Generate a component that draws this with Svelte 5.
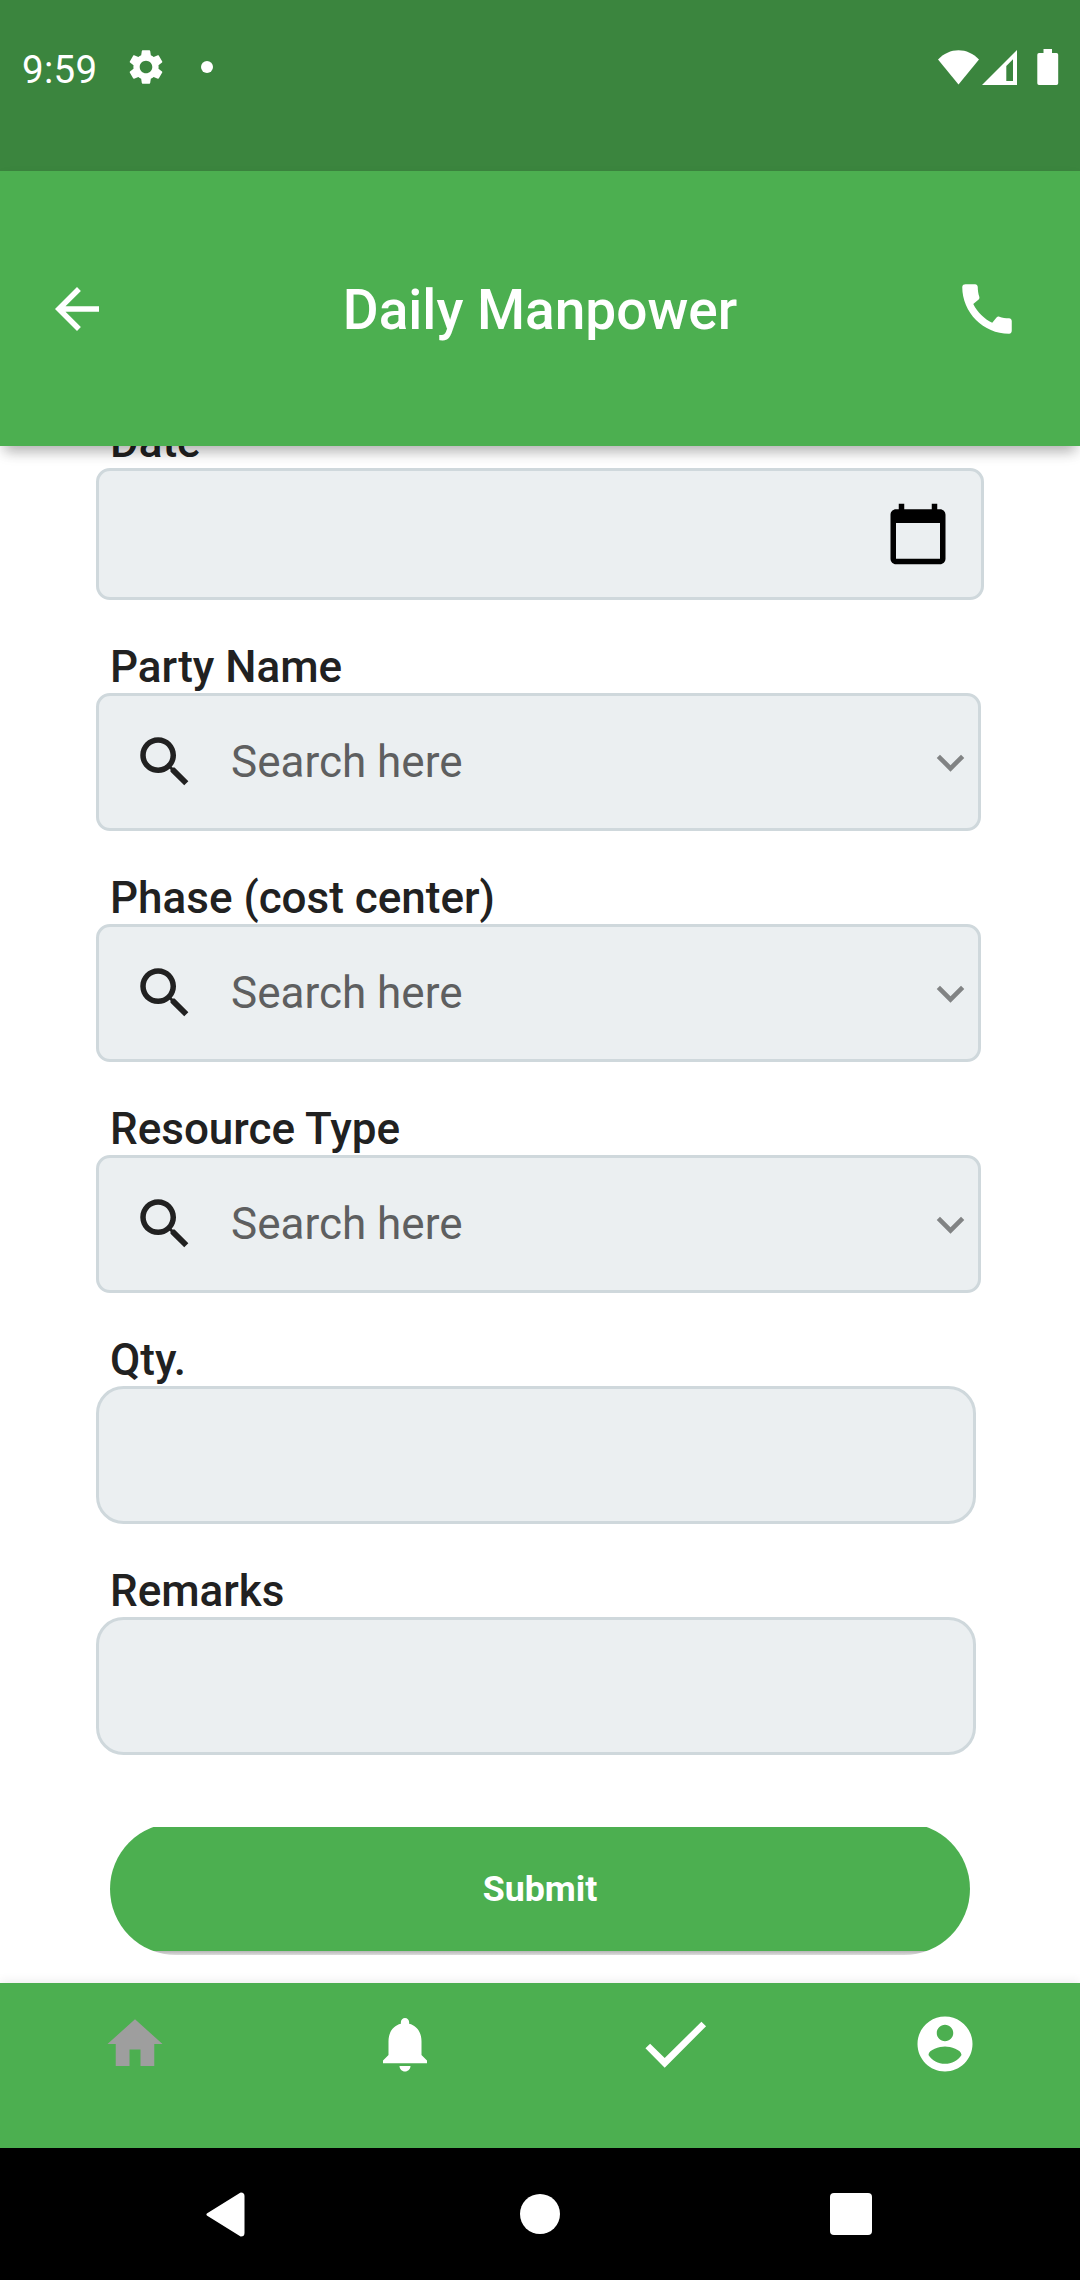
<script>
  const selects = ['Party Name', 'Phase (cost center)', 'Resource Type'];
  const inputs = ['Qty.', 'Remarks'];
</script>

<div class="screen">
  <div class="status">
    <span class="clock">9:59</span>
    <svg class="gear" viewBox="0 0 24 24"><path d="M19.14 12.94c.04-.3.06-.61.06-.94 0-.32-.02-.64-.07-.94l2.03-1.58c.18-.14.23-.41.12-.61l-1.92-3.32c-.12-.22-.37-.29-.59-.22l-2.39.96c-.5-.38-1.03-.7-1.62-.94l-.36-2.54c-.04-.24-.24-.41-.48-.41h-3.84c-.24 0-.43.17-.47.41l-.36 2.54c-.59.24-1.13.57-1.62.94l-2.39-.96c-.22-.08-.47 0-.59.22L2.74 8.87c-.12.21-.08.47.12.61l2.03 1.58c-.05.3-.09.63-.09.94s.02.64.07.94l-2.03 1.58c-.18.14-.23.41-.12.61l1.92 3.32c.12.22.37.29.59.22l2.39-.96c.5.38 1.03.7 1.62.94l.36 2.54c.05.24.24.41.48.41h3.84c.24 0 .44-.17.47-.41l.36-2.54c.59-.24 1.13-.56 1.62-.94l2.39.96c.22.08.47 0 .59-.22l1.92-3.32c.12-.22.07-.47-.12-.61l-2.01-1.58zM12 15.6c-1.98 0-3.6-1.62-3.6-3.6s1.62-3.6 3.6-3.6 3.6 1.62 3.6 3.6-1.62 3.6-3.6 3.6z" /></svg>
    <span class="dot"></span>
    <svg class="signals" viewBox="0 0 124 40">
      <path d="M0 12.5C5.5 6.500 13 3.200 20.500 3.200S35.500 6.500 41 12.500L20.500 37.500z" />
      <path fill-rule="evenodd" d="M44 38L79 3V38zM68.300 19v15h6.700V12.300z" />
      <path d="M105.500 2h8.500v4h4.500a1.700 1.700 0 0 1 1.700 1.700v28.600a1.700 1.700 0 0 1-1.700 1.700h-17.500a1.700 1.700 0 0 1-1.700-1.700V7.700A1.700 1.700 0 0 1 101 6h4.500z" />
    </svg>
  </div>

  <header>
    <svg class="icon" viewBox="0 0 24 24"><path d="M20 11H7.830l5.590-5.590L12 4l-8 8 8 8 1.410-1.410L7.830 13H20v-2z" /></svg>
    <h1>Daily Manpower</h1>
    <svg class="icon" viewBox="0 0 24 24"><path d="M20.010 15.380c-1.230 0-2.420-.2-3.530-.560-.350-.120-.740-.030-1.010.240l-1.570 1.970c-2.830-1.350-5.480-3.900-6.890-6.830l1.950-1.660c.270-.280.350-.670.240-1.020-.370-1.110-.560-2.300-.560-3.530 0-.540-.450-.990-.990-.990H4.190C3.650 3 3 3.240 3 3.990 3 13.280 10.730 21 20.010 21c.710 0 .990-.630.990-1.180v-3.450c0-.540-.450-.990-.990-.990z" /></svg>
  </header>

  <main>
    <div class="group">
      <span class="label">Date</span>
      <div class="field date">
        <svg class="icon" viewBox="0 0 24 24"><path d="M20 3h-1V1h-2v2H7V1H5v2H4c-1.100 0-2 .9-2 2v16c0 1.100.9 2 2 2h16c1.100 0 2-.9 2-2V5c0-1.100-.9-2-2-2zm0 18H4V8h16v13z" /></svg>
      </div>
    </div>
    {#each selects as name}
      <div class="group">
        <span class="label">{name}</span>
        <div class="field select">
          <svg class="icon" viewBox="0 0 24 24"><path d="M15.500 14h-.790l-.280-.270C15.410 12.590 16 11.110 16 9.500 16 5.910 13.090 3 9.500 3S3 5.910 3 9.500 5.910 16 9.500 16c1.610 0 3.090-.590 4.230-1.570l.270.280v.790l5 4.990L20.490 19l-4.990-5zm-6 0C7.010 14 5 11.990 5 9.500S7.010 5 9.500 5 14 7.010 14 9.500 11.990 14 9.500 14z" /></svg>
          <span class="hint">Search here</span>
          <svg class="chevron" viewBox="0 0 24 24"><path d="M7.410 8.590L12 13.170l4.590-4.580L18 10l-6 6-6-6z" /></svg>
        </div>
      </div>
    {/each}
    {#each inputs as name}
      <div class="group">
        <span class="label">{name}</span>
        <div class="field text"></div>
      </div>
    {/each}
    <button>Submit</button>
  </main>

  <nav class="tabs">
    <svg class="icon active" viewBox="0 0 24 24"><path d="M10 20v-6h4v6h5v-8h3L12 3 2 12h3v8z" /></svg>
    <svg class="icon" viewBox="0 0 24 24"><path d="M12 22c1.100 0 2-.9 2-2h-4c0 1.100.890 2 2 2zm6-6v-5c0-3.070-1.640-5.640-4.500-6.320V4c0-.830-.670-1.500-1.500-1.500s-1.500.670-1.500 1.500v.680C7.630 5.360 6 7.920 6 11v5l-2 2v1h16v-1l-2-2z" /></svg>
    <svg class="icon" viewBox="0 0 24 24"><path d="M1.250 13.550L2.950 11.880 8.250 17.120 21.600 3.900 23.300 5.530 8.250 20.600z" /></svg>
    <svg class="icon" viewBox="0 0 24 24"><path d="M12 2C6.480 2 2 6.480 2 12s4.480 10 10 10 10-4.480 10-10S17.520 2 12 2zm0 3c1.660 0 3 1.340 3 3s-1.340 3-3 3-3-1.340-3-3 1.340-3 3-3zm0 14.200c-2.500 0-4.710-1.280-6-3.220.030-1.990 4-3.080 6-3.080 1.990 0 5.970 1.090 6 3.080-1.290 1.940-3.500 3.220-6 3.220z" /></svg>
  </nav>

  <div class="system">
    <svg class="back" viewBox="0 0 39 45"><path d="M35 2L2 22.500L35 43Q37 43 37 41V4Q37 2 35 2z" /></svg>
    <span class="home"></span>
    <span class="recent"></span>
  </div>
</div>

<style>
  :global(body) {
    margin: 0;
  }
  .screen {
    width: 1080px;
    height: 2280px;
    overflow: hidden;
    display: flex;
    flex-direction: column;
    background: #fff;
    color: #212121;
    font-family: Roboto, sans-serif;
  }
  svg {
    display: block;
    flex: none;
    fill: currentColor;
  }
  .icon {
    width: 66px;
    height: 66px;
  }

  .status {
    box-sizing: border-box;
    height: 171px;
    flex: none;
    display: flex;
    align-items: flex-start;
    padding: 46px 20px 0 22px;
    background: #3b853e;
    color: #fff;
  }
  .clock {
    width: 103px;
    font-size: 38.500px;
    line-height: 47px;
    letter-spacing: 0.3px;
  }
  .gear {
    width: 42px;
    height: 42px;
  }
  .dot {
    width: 12px;
    height: 12px;
    margin: 15px 0 0 34px;
    border-radius: 50%;
    background: #fff;
  }
  .signals {
    width: 124px;
    height: 40px;
    margin: 1px -2px 0 auto;
  }

  header {
    box-sizing: border-box;
    height: 275px;
    flex: none;
    display: grid;
    grid-template-columns: 66px 1fr 66px;
    align-items: start;
    padding: 105px 60px 0 44px;
    background: #4caf50;
    color: #fff;
    position: relative;
    z-index: 1;
    box-shadow: 0 10px 13px -5px rgba(0, 0, 0, 0.28), 0 6px 14px rgba(0, 0, 0, 0.06);
  }
  h1 {
    margin: 0;
    padding: 1px 0 0 16px;
    font-size: 55px;
    font-weight: 500;
    line-height: 66px;
    text-align: center;
  }

  main {
    height: 1537px;
    flex: none;
    box-sizing: border-box;
    padding: 0 96px;
    display: flex;
    flex-direction: column;
  }
  .group {
    height: 231px;
    flex: none;
    display: flex;
    flex-direction: column;
  }
  .group:first-child {
    height: 225px;
    margin-top: -71px;
  }
  .label {
    box-sizing: border-box;
    height: 93px;
    padding: 41px 0 0 14px;
    font-size: 44px;
    font-weight: 500;
    line-height: 52px;
    white-space: nowrap;
  }
  .field {
    box-sizing: border-box;
    height: 138px;
    display: flex;
    align-items: center;
    border: 3px solid #cfd8dc;
    border-radius: 14px;
    background: #ebeff1;
  }
  .date {
    width: 888px;
    height: 132px;
    justify-content: flex-end;
    padding-right: 30px;
    color: #000;
  }
  .select {
    width: 885px;
    padding-left: 33px;
  }
  .text {
    width: 880px;
    border-radius: 27.500px;
  }
  .hint {
    flex: 1;
    padding-left: 33px;
    font-size: 44px;
    line-height: 52px;
    color: #5e5f60;
  }
  .chevron {
    width: 55px;
    height: 55px;
    color: #818384;
  }
  button {
    flex: none;
    width: 860px;
    height: 132px;
    margin: 68px 0 0 14px;
    padding: 0;
    border: 0;
    border-radius: 66px;
    background: linear-gradient(transparent 4px, #4caf50 4px, #4caf50 128px, #b5b5b5 128px, #dcdcdc 132px);
    color: #fff;
    font: 700 35.750px Roboto, sans-serif;
  }

  .tabs {
    height: 165px;
    flex: none;
    box-sizing: border-box;
    display: grid;
    grid-template-columns: repeat(4, 1fr);
    justify-items: center;
    padding-top: 28px;
    background: #4caf50;
    color: #fff;
    box-shadow: 0 -2px 10px rgba(0, 0, 0, 0.07);
    position: relative;
  }
  .active {
    color: #9e9e9e;
  }

  .system {
    flex: 1;
    display: grid;
    grid-template-columns: 1fr 40px 1fr;
    align-items: center;
    padding: 0 208px 0 206px;
    background: #000;
    color: #fff;
  }
  .back {
    width: 39px;
    height: 45px;
    stroke: #fff;
    stroke-width: 3;
    stroke-linejoin: round;
  }
  .home {
    width: 40px;
    height: 40px;
    margin-left: 1px;
    border-radius: 50%;
    background: #fff;
  }
  .recent {
    justify-self: end;
    width: 42px;
    height: 42px;
    border-radius: 4px;
    background: #fff;
  }
</style>
